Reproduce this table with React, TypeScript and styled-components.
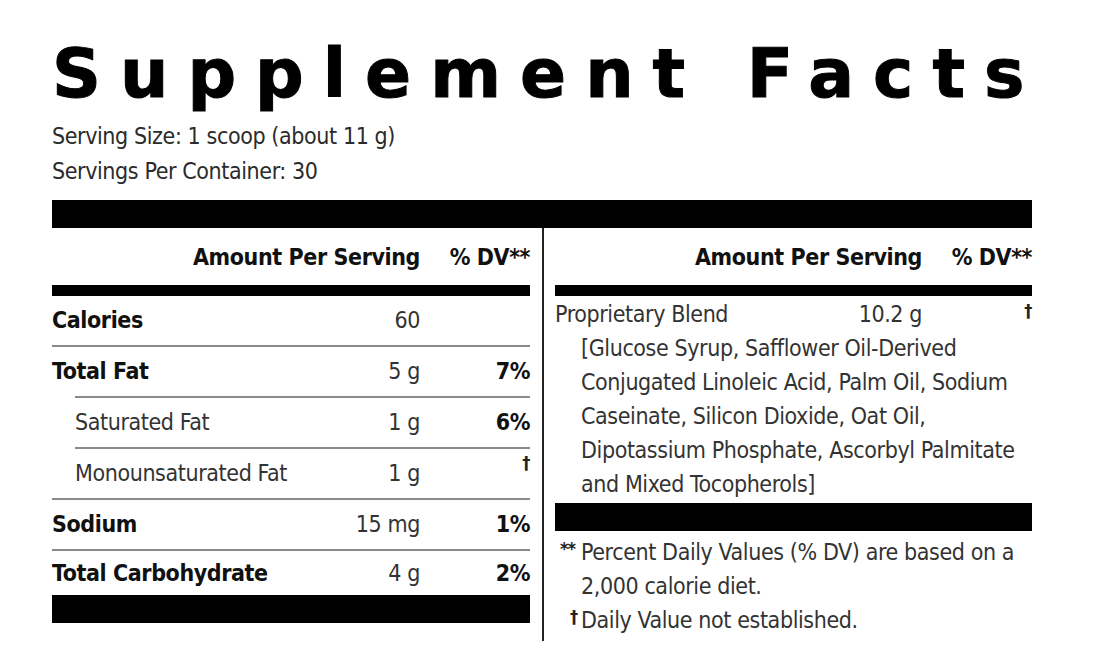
import styled, { createGlobalStyle } from 'styled-components'

const GlobalStyle = createGlobalStyle`
  html, body {
    margin: 0;
    padding: 0;
    background: #ffffff;
  }
  body {
    font-family: "Liberation Sans Narrow", "DejaVu Sans Condensed", "Liberation Sans", sans-serif;
    font-size: 23px;
    letter-spacing: -0.4px;
    color: #2b2b2b;
  }
`

const Label = styled.div`
  width: 980px;
  margin-left: 52px;
  padding-top: 40px;
`

const Title = styled.h1`
  margin: 0;
  font-family: "DejaVu Sans", Verdana, sans-serif;
  font-weight: bold;
  font-size: 68px;
  line-height: 68px;
  letter-spacing: 19px;
  color: #000;
  white-space: nowrap;
  -webkit-text-stroke: 1px #000;
`

const Serving = styled.div`
  margin-top: 11px;
  line-height: 35px;
`

const Bar = styled.div<{ h: number; gap?: number }>`
  height: ${p => p.h}px;
  margin-top: ${p => p.gap ?? 0}px;
  background: #000;
`

const TopBar = styled(Bar)`
  margin-top: 11px;
`

const Columns = styled.div`
  display: grid;
  grid-template-columns: 478px 2px 477px;
  justify-content: space-between;
`

const Divider = styled.div`
  background: #222;
`

const Column = styled.div`
  display: flex;
  flex-direction: column;
  padding-bottom: 4px;
`

const HeadRow = styled.div`
  height: 57px;
  box-sizing: border-box;
  padding-bottom: 10px;
  display: grid;
  grid-template-columns: 1fr 110px;
  align-items: end;
  font-weight: bold;
  line-height: 35px;
  color: #111;
  text-align: right;
`

const Row = styled.div<{ line?: 'full' | 'indent' | 'none' }>`
  height: ${p => (p.line === 'none' ? 44 : 51)}px;
  display: grid;
  grid-template-columns: 1fr 110px 110px;
  align-items: center;
  line-height: 35px;
  padding-bottom: ${p => (p.line === 'none' ? 0 : 2)}px;
  box-sizing: border-box;
  background: ${p =>
    p.line === 'none'
      ? 'none'
      : `linear-gradient(#8a8a8a, #8a8a8a) ${p.line === 'indent' ? '23px' : '0'} 100% / 100% 2px no-repeat`};
`

const Name = styled.span<{ bold?: boolean; sub?: boolean }>`
  font-weight: ${p => (p.bold ? 'bold' : 'normal')};
  color: ${p => (p.bold ? '#111' : '#333')};
  padding-left: ${p => (p.sub ? '23px' : '0')};
  white-space: nowrap;
`

const Amount = styled.span`
  text-align: right;
  color: #333;
  white-space: nowrap;
`

const Dv = styled.span`
  text-align: right;
  font-weight: bold;
  color: #111;
`

const Dagger = styled.span`
  text-align: right;
  font-size: 18px;
  font-weight: bold;
  align-self: start;
  line-height: 22px;
  padding-top: 3px;
  color: #222;
`

const BlendRow = styled.div`
  display: grid;
  grid-template-columns: 1fr 110px 110px;
  line-height: 34px;
  color: #333;
  margin-top: 1px;
`

const Ingredients = styled.div`
  padding-left: 26px;
  line-height: 34px;
  color: #333;
  white-space: nowrap;
`

const Notes = styled.div`
  margin-top: 4px;
  line-height: 34px;
  color: #333;
  white-space: nowrap;
`

const Note = styled.div`
  position: relative;
  padding-left: 26px;
`

const Mark = styled.span<{ inset: number }>`
  position: absolute;
  right: calc(100% - ${p => p.inset}px);
  top: -3px;
  font-size: 18px;
  font-weight: bold;
  letter-spacing: -1px;
  color: #222;
`

const left = [
  { name: 'Calories', amount: '60', dv: '', bold: true, line: 'full' },
  { name: 'Total Fat', amount: '5 g', dv: '7%', bold: true, line: 'indent' },
  { name: 'Saturated Fat', amount: '1 g', dv: '6%', sub: true, line: 'indent' },
  { name: 'Monounsaturated Fat', amount: '1 g', dv: '†', sub: true, line: 'full' },
  { name: 'Sodium', amount: '15 mg', dv: '1%', bold: true, line: 'full' },
  { name: 'Total Carbohydrate', amount: '4 g', dv: '2%', bold: true, line: 'none' },
] as const

const ingredientLines = [
  '[Glucose Syrup, Safflower Oil-Derived',
  'Conjugated Linoleic Acid, Palm Oil, Sodium',
  'Caseinate, Silicon Dioxide, Oat Oil,',
  'Dipotassium Phosphate, Ascorbyl Palmitate',
  'and Mixed Tocopherols]',
]

function Header() {
  return (
    <HeadRow>
      <span>Amount Per Serving</span>
      <span>% DV**</span>
    </HeadRow>
  )
}

export default function App() {
  return (
    <>
      <GlobalStyle />
      <Label>
        <Title>Supplement Facts</Title>
        <Serving>
          Serving Size: 1 scoop (about 11 g)
          <br />
          Servings Per Container: 30
        </Serving>
        <TopBar h={28} />
        <Columns>
          <Column>
            <Header />
            <Bar h={11} />
            {left.map(r => (
              <Row key={r.name} line={r.line}>
                <Name bold={'bold' in r} sub={'sub' in r}>{r.name}</Name>
                <Amount>{r.amount}</Amount>
                {r.dv === '†' ? <Dagger>†</Dagger> : <Dv>{r.dv}</Dv>}
              </Row>
            ))}
            <Bar h={28} />
          </Column>
          <Divider />
          <Column>
            <Header />
            <Bar h={11} />
            <BlendRow>
              <span>Proprietary Blend</span>
              <Amount>10.2 g</Amount>
              <Dagger>†</Dagger>
            </BlendRow>
            <Ingredients>
              {ingredientLines.map(l => (
                <div key={l}>{l}</div>
              ))}
            </Ingredients>
            <Bar h={28} gap={2} />
            <Notes>
              <Note>
                <Mark inset={20}>**</Mark>Percent Daily Values (% DV) are based on a
                <br />
                2,000 calorie diet.
              </Note>
              <Note>
                <Mark inset={22}>†</Mark>Daily Value not established.
              </Note>
            </Notes>
          </Column>
        </Columns>
      </Label>
    </>
  )
}
